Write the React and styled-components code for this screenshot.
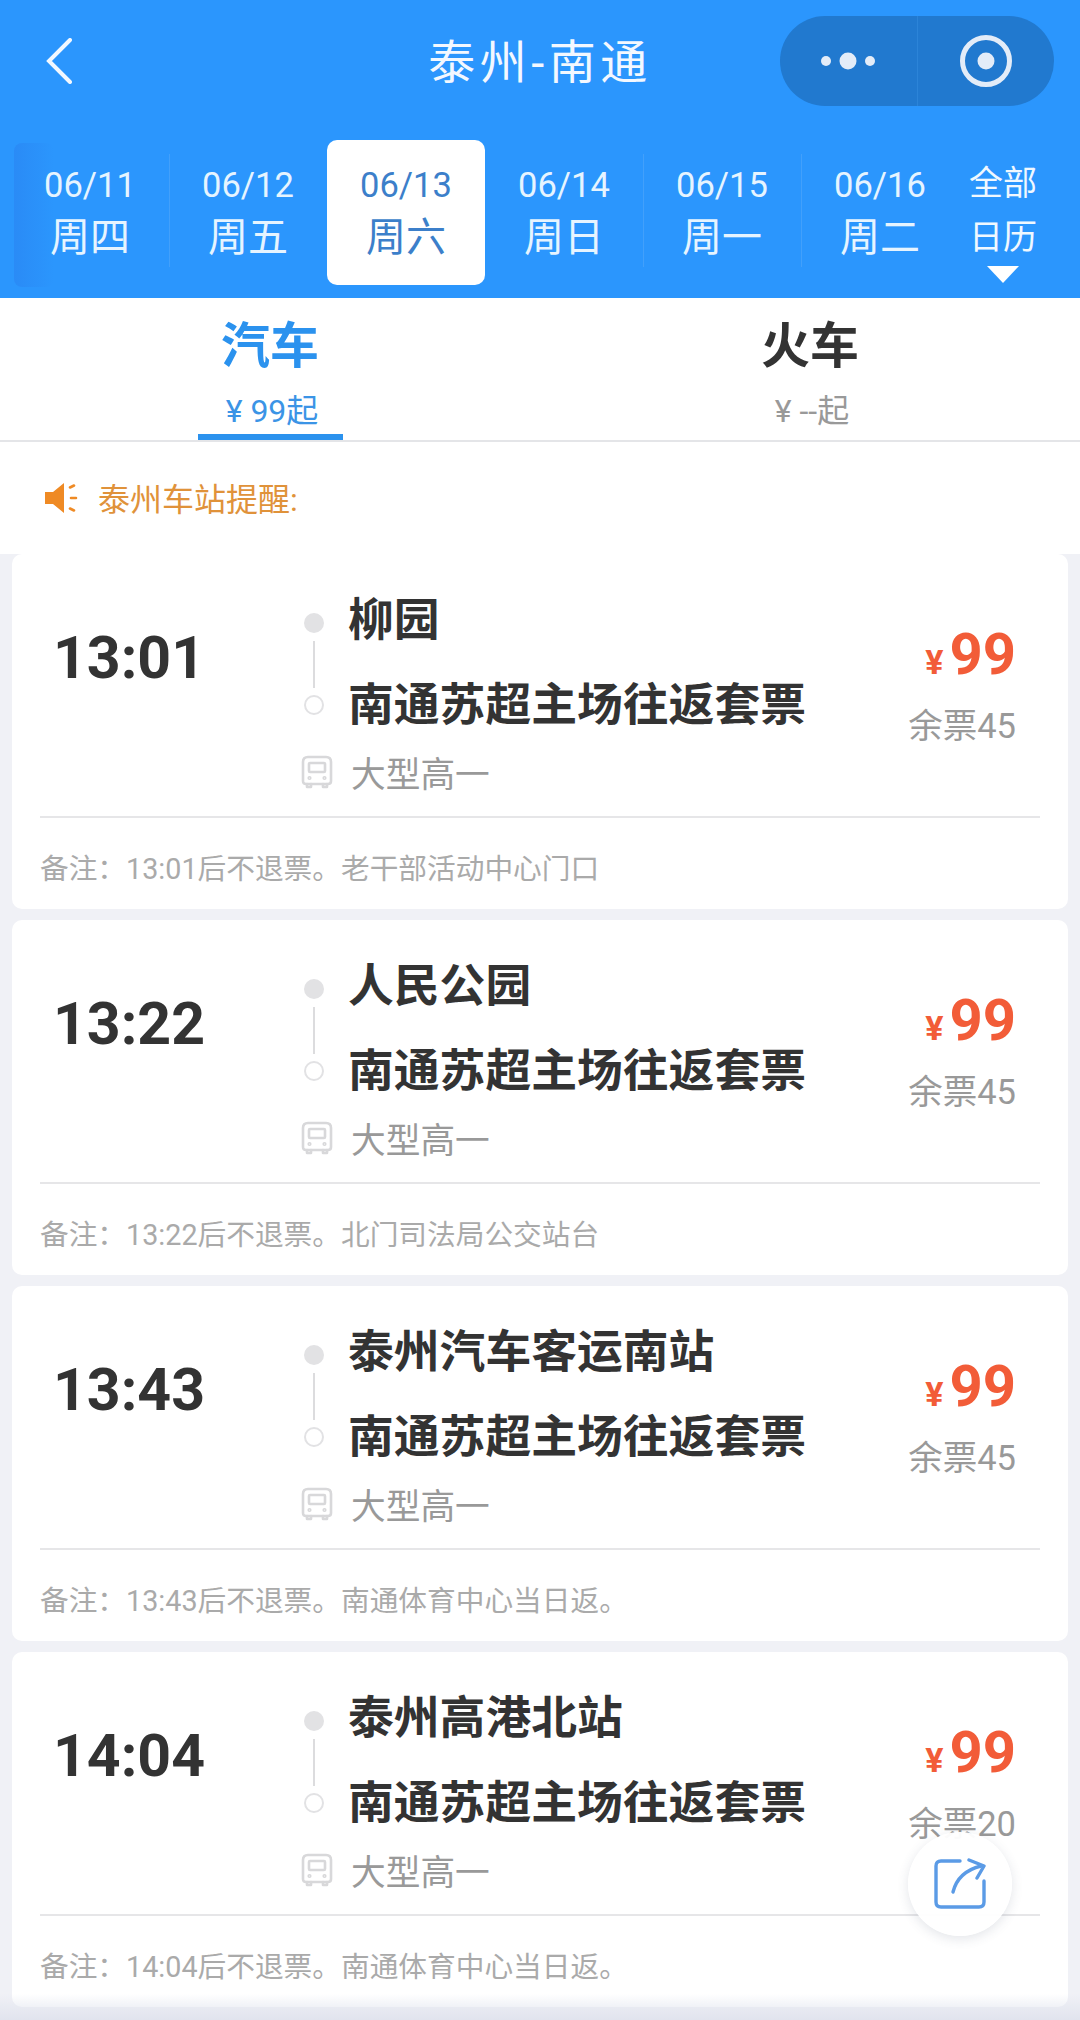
import React from "react";
import styled, { createGlobalStyle } from "styled-components";

const Global = createGlobalStyle`
  html, body { margin: 0; padding: 0; background: #f0f1f6; }
  body { font-family: Roboto, "Noto Sans CJK SC", sans-serif; color: #333; }
  * { box-sizing: border-box; }
`;

const Page = styled.div`
  position: relative;
  width: 1080px;
  height: 2020px;
  overflow: hidden;
  background: #f0f1f6;
`;

const Header = styled.header`
  position: relative;
  height: 298px;
  background: #2b96fd;
  color: #fff;
`;

const TopBar = styled.div`
  display: grid;
  grid-template-columns: 1fr auto 1fr;
  align-items: center;
  height: 122px;
  padding: 0 26px;
`;

const Title = styled.h1`
  margin: 0;
  padding-top: 4px;
  font-size: 47px;
  font-weight: 400;
  letter-spacing: 4.5px;
  line-height: 60px;
  color: #f3f8ff;
`;

const BackButton = styled.div`
  display: flex;
  align-items: center;
  justify-self: start;
  margin-left: 20px;
`;

const Capsule = styled.div`
  justify-self: end;
  display: flex;
  width: 274px;
  height: 90px;
  border-radius: 45px;
  background: #2179cf;
`;

const CapsulePart = styled.div`
  flex: 1;
  display: flex;
  align-items: center;
  justify-content: center;
  & + & { border-left: 1px solid #2c84d8; }
`;

const DateStrip = styled.div`
  position: relative;
  display: flex;
  margin-top: 18px;
  height: 145px;
  padding-left: 11px;
`;

const EdgeShade = styled.div`
  position: absolute;
  left: 14px;
  top: 3px;
  bottom: -2px;
  width: 40px;
  border-radius: 8px;
  background: linear-gradient(90deg, #2a8bf6, #2b96fd);
`;

const DateCell = styled.div`
  position: relative;
  width: 158px;
  padding-top: 25px;
  text-align: center;
  border-radius: 10px;
  background: ${(p) => (p.$active ? "#fff" : "transparent")};
  color: ${(p) => (p.$active ? "#3c7fca" : "#e6f4ff")};
  ${(p) =>
    p.$divider
      ? `&::after { content: ""; position: absolute; right: -1px; top: 14px; bottom: 18px; width: 1px; background: #42a0fb; }`
      : ""}
`;

const DateText = styled.div`
  font-size: 34.5px;
  line-height: 40px;
`;

const WeekText = styled.div`
  margin-top: 9px;
  font-size: 40px;
  line-height: 48px;
`;

const CalendarCell = styled.div`
  width: 88px;
  display: flex;
  flex-direction: column;
  align-items: center;
  padding-top: 22px;
  color: #f0f8ff;
`;

const CalendarLine = styled.div`
  font-size: 34px;
  line-height: 42px;
  & + & { margin-top: 12px; }
`;

const Triangle = styled.div`
  width: 0;
  height: 0;
  margin-top: 8px;
  border-left: 16px solid transparent;
  border-right: 16px solid transparent;
  border-top: 17px solid #fff;
`;

const Tabs = styled.div`
  display: flex;
  height: 144px;
  background: #fff;
  border-bottom: 2px solid #e4e5e8;
`;

const Tab = styled.div`
  position: relative;
  width: 540px;
  display: flex;
  flex-direction: column;
  align-items: center;
  padding-top: 19px;
  color: ${(p) => (p.$active ? "#2b92ee" : "#333")};
`;

const TabName = styled.div`
  font-size: 49px;
  font-weight: 700;
  line-height: 60px;
`;

const TabPrice = styled.div`
  margin-top: 14px;
  padding-left: 4px;
  font-size: 32px;
  line-height: 40px;
  color: ${(p) => (p.$active ? "#3b94e6" : "#999")};
`;

const TabBar = styled.div`
  position: absolute;
  left: 198px;
  bottom: 0;
  width: 145px;
  height: 6px;
  background: #2b92ee;
`;

const Notice = styled.div`
  display: flex;
  align-items: center;
  gap: 20px;
  height: 112px;
  padding: 0 0 0 44px;
  background: #fff;
`;

const NoticeText = styled.span`
  position: relative;
  top: -1px;
  font-size: 32px;
  color: #e0923a;
`;

const List = styled.div`
  display: flex;
  flex-direction: column;
  gap: 11px;
  padding: 0 12px;
`;

const Card = styled.article`
  height: 355px;
  padding: 0 28px;
  background: #fff;
  border-radius: 10px;
`;

const Main = styled.div`
  display: grid;
  grid-template-columns: 262px 1fr auto;
  height: 264px;
  border-bottom: 2px solid #e6e6e8;
`;

const Time = styled.div`
  padding: 70px 0 0 13px;
  font-size: 59px;
  font-weight: 700;
  line-height: 68px;
  color: #333;
`;

const Route = styled.div`
  display: grid;
  grid-template-columns: 46px 1fr;
  grid-template-rows: 85px 85px 58px;
  padding-top: 19px;
`;

const Timeline = styled.div`
  grid-row: 1 / 3;
  display: flex;
  flex-direction: column;
  align-items: center;
  width: 24px;
  padding-top: 40px;
`;

const Dot = styled.div`
  width: 20px;
  height: 20px;
  border-radius: 50%;
  background: ${(p) => (p.$hollow ? "#fff" : "#e2e2e4")};
  border: ${(p) => (p.$hollow ? "2px solid #e2e2e4" : "none")};
`;

const Line = styled.div`
  width: 2px;
  height: 47px;
  margin: 8px 0 7px;
  background: #dcdcde;
`;

const Stop = styled.div`
  grid-column: 2;
  display: flex;
  align-items: center;
  font-size: 45.8px;
  font-weight: 700;
  color: #333;
  white-space: nowrap;
`;

const BusIcon = styled.div`
  display: flex;
  align-items: center;
  grid-column: 1;
  margin-left: -1px;
`;

const BusType = styled.div`
  display: flex;
  align-items: center;
  padding-left: 3px;
  font-size: 34.7px;
  color: #999;
`;

const Price = styled.div`
  display: flex;
  flex-direction: column;
  align-items: flex-end;
  padding: 65px 24px 0 0;
`;

const Amount = styled.div`
  display: flex;
  align-items: baseline;
  gap: 6px;
  font-size: 58px;
  font-weight: 700;
  line-height: 70px;
  color: #f25c38;
`;

const Yen = styled.span`
  font-size: 34px;
`;

const Left = styled.div`
  margin-top: 9px;
  font-size: 34.5px;
  line-height: 40px;
  color: #999;
`;

const Note = styled.div`
  display: flex;
  align-items: center;
  height: 91px;
  padding-top: 5px;
  font-size: 28.7px;
  color: #aaa;
  white-space: nowrap;
`;

const Share = styled.div`
  position: absolute;
  left: 908px;
  top: 1832px;
  display: flex;
  align-items: center;
  justify-content: center;
  width: 104px;
  height: 104px;
  border-radius: 50%;
  background: rgba(255, 255, 255, 0.96);
  box-shadow: 0 3px 12px rgba(60, 70, 100, 0.14);
`;

const BottomFade = styled.div`
  position: absolute;
  left: 0;
  right: 0;
  bottom: 0;
  height: 26px;
  background: linear-gradient(180deg, rgba(225, 228, 238, 0), #e1e4ee);
`;

const Chevron = () => (
  <svg width="26" height="46" viewBox="0 0 26 46" fill="none">
    <path d="M24 2 L3 23 L24 44" stroke="#f2f8ff" strokeWidth="4" strokeLinecap="round" strokeLinejoin="miter" />
  </svg>
);

const MoreDots = () => (
  <svg width="60" height="20" viewBox="0 0 60 20" fill="#e3ecf8">
    <circle cx="8" cy="10" r="5" />
    <circle cx="30" cy="10" r="8.5" />
    <circle cx="52" cy="10" r="5" />
  </svg>
);

const Target = () => (
  <svg width="54" height="54" viewBox="0 0 54 54" fill="none">
    <circle cx="27" cy="27" r="23.5" stroke="#e3ecf8" strokeWidth="5" />
    <circle cx="27" cy="27" r="8.5" fill="#e3ecf8" />
  </svg>
);

const Speaker = () => (
  <svg width="34" height="34" viewBox="0 0 34 34" fill="none">
    <path d="M1 11 H9 L20 2 V32 L9 23 H1 Z" fill="#ef8a24" />
    <path d="M26 6.5 L30 4.5 M27 17 H32 M26 27.5 L30 29.5" stroke="#ef8a24" strokeWidth="2.6" strokeLinecap="round" />
  </svg>
);

const Bus = () => (
  <svg width="32" height="34" viewBox="0 0 32 34" fill="none" stroke="#d8d8da" strokeWidth="2.6" strokeLinecap="round" strokeLinejoin="round">
    <path d="M7 2 H25 Q30 2 30 7 V26 Q30 29 27 29 H5 Q2 29 2 26 V7 Q2 2 7 2 Z" />
    <path d="M9 8 H23 Q24 8 24 9 V16 Q24 17 23 17 H9 Q8 17 8 16 V9 Q8 8 9 8 Z" />
    <path d="M6 29 V32 H10 V29 M22 29 V32 H26 V29" />
    <circle cx="8.5" cy="23" r="0.8" />
    <circle cx="23.5" cy="23" r="0.8" />
  </svg>
);

const ShareIcon = () => (
  <svg width="52" height="52" viewBox="0 0 52 52" fill="none" stroke="#5b9be6" strokeWidth="3.4" strokeLinecap="round" strokeLinejoin="round">
    <path d="M26 3 H7 Q2 3 2 8 V44 Q2 49 7 49 H45 Q50 49 50 44 V23" />
    <path d="M19 34 C22 22 31 12 47 8" />
    <path d="M35 2 L50 8 L43 20" />
  </svg>
);

const dates = [
  ["06/11", "周四"],
  ["06/12", "周五"],
  ["06/13", "周六", true],
  ["06/14", "周日"],
  ["06/15", "周一"],
  ["06/16", "周二"],
];

const trips = [
  { time: "13:01", from: "柳园", left: 45, note: "备注：13:01后不退票。老干部活动中心门口" },
  { time: "13:22", from: "人民公园", left: 45, note: "备注：13:22后不退票。北门司法局公交站台" },
  { time: "13:43", from: "泰州汽车客运南站", left: 45, note: "备注：13:43后不退票。南通体育中心当日返。" },
  { time: "14:04", from: "泰州高港北站", left: 20, note: "备注：14:04后不退票。南通体育中心当日返。" },
];

export default function App() {
  return (
    <Page>
      <Global />
      <Header>
        <TopBar>
          <BackButton>
            <Chevron />
          </BackButton>
          <Title>泰州-南通</Title>
          <Capsule>
            <CapsulePart>
              <MoreDots />
            </CapsulePart>
            <CapsulePart>
              <Target />
            </CapsulePart>
          </Capsule>
        </TopBar>
        <DateStrip>
          <EdgeShade />
          {dates.map(([d, w, active], i) => (
            <DateCell key={d} $active={active} $divider={!active && i !== 1 && i !== 5}>
              <DateText>{d}</DateText>
              <WeekText>{w}</WeekText>
            </DateCell>
          ))}
          <CalendarCell>
            <CalendarLine>全部</CalendarLine>
            <CalendarLine>日历</CalendarLine>
            <Triangle />
          </CalendarCell>
        </DateStrip>
      </Header>
      <Tabs>
        <Tab $active>
          <TabName>汽车</TabName>
          <TabPrice $active>¥ 99起</TabPrice>
          <TabBar />
        </Tab>
        <Tab>
          <TabName>火车</TabName>
          <TabPrice>¥ --起</TabPrice>
        </Tab>
      </Tabs>
      <Notice>
        <Speaker />
        <NoticeText>泰州车站提醒:</NoticeText>
      </Notice>
      <List>
        {trips.map((t) => (
          <Card key={t.time}>
            <Main>
              <Time>{t.time}</Time>
              <Route>
                <Timeline>
                  <Dot />
                  <Line />
                  <Dot $hollow />
                </Timeline>
                <Stop>{t.from}</Stop>
                <Stop>南通苏超主场往返套票</Stop>
                <BusIcon>
                  <Bus />
                </BusIcon>
                <BusType>大型高一</BusType>
              </Route>
              <Price>
                <Amount>
                  <Yen>¥</Yen>99
                </Amount>
                <Left>余票{t.left}</Left>
              </Price>
            </Main>
            <Note>{t.note}</Note>
          </Card>
        ))}
      </List>
      <BottomFade />
      <Share>
        <ShareIcon />
      </Share>
    </Page>
  );
}
